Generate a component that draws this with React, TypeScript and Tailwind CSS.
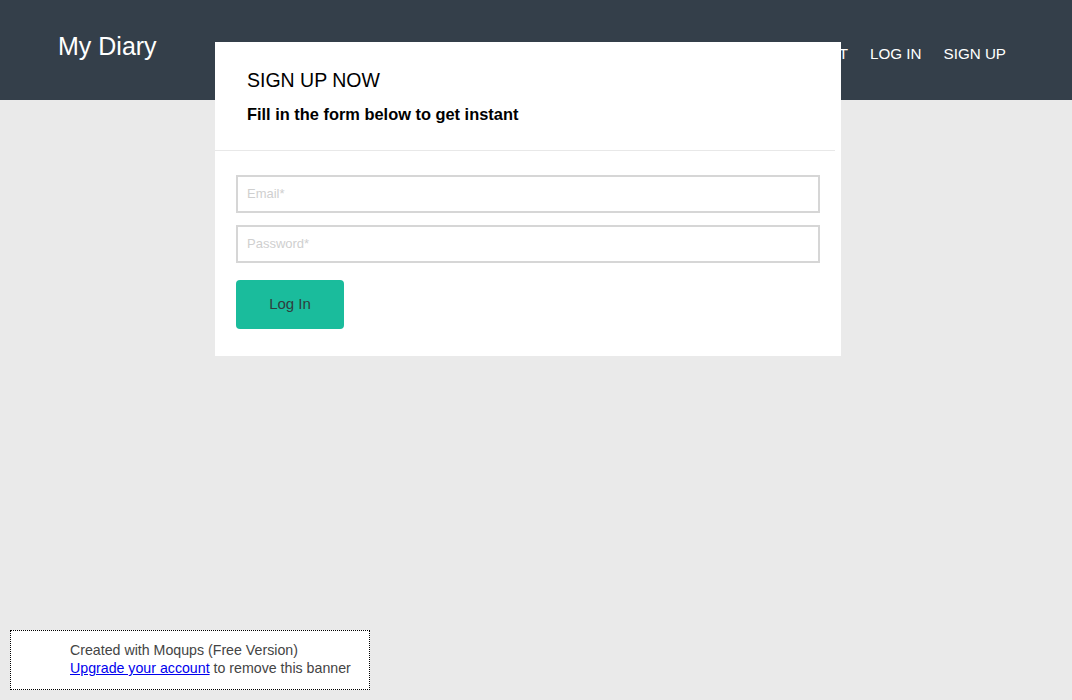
import React from "react";

export default function App() {
  return (
    <div
      className="relative w-[1072px] h-[700px] bg-[#eaeaea] overflow-hidden"
      style={{ fontFamily: '"Liberation Sans", Arial, sans-serif' }}
    >
      <header className="h-[100px] bg-[#343f4a] flex items-start justify-between pl-[58px] pr-[66px]">
        <div className="text-white text-[25px] leading-none mt-[34px]">My Diary</div>
        <nav className="flex gap-[22px] text-white text-[15.2px] leading-none mt-[46px]">
          <span>ABOUT</span>
          <span>LOG IN</span>
          <span>SIGN UP</span>
        </nav>
      </header>

      <div className="absolute left-[215px] top-[42px] w-[626px] bg-white">
        <div className="pl-[32px] pt-[27px] h-[108px]">
          <div className="text-black text-[19.5px] leading-[22px]">SIGN UP NOW</div>
          <div className="text-black text-[16.4px] font-bold leading-[20px] mt-[13px]">
            Fill in the form below to get instant
          </div>
        </div>
        <div className="w-[620px] h-px bg-[#e8e8e8]" />
        <div className="px-[21px] pt-[24px] pb-[27px] flex flex-col">
          <div className="h-[38px] border-2 border-[#d6d6d6] flex items-center pl-[9px] text-[13px] text-[#cfcfcf]">
            Email*
          </div>
          <div className="h-[38px] border-2 border-[#d6d6d6] flex items-center pl-[9px] text-[13px] text-[#cfcfcf] mt-[12px]">
            Password*
          </div>
          <div className="mt-[17px] w-[108px] h-[49px] rounded-[4px] bg-[#1abc9c] flex items-center justify-center text-[15px] text-[#2f3d3d]">
            Log In
          </div>
        </div>
      </div>

      <div className="absolute left-[10px] top-[630px] w-[360px] h-[60px] bg-white border border-dotted border-black pl-[59px] pt-[10px] text-[14.2px] leading-[18px] text-[#444]">
        <div>Created with Moqups (Free Version)</div>
        <div>
          <span className="text-[#0000ee] underline">Upgrade your account</span> to remove this banner
        </div>
      </div>
    </div>
  );
}
